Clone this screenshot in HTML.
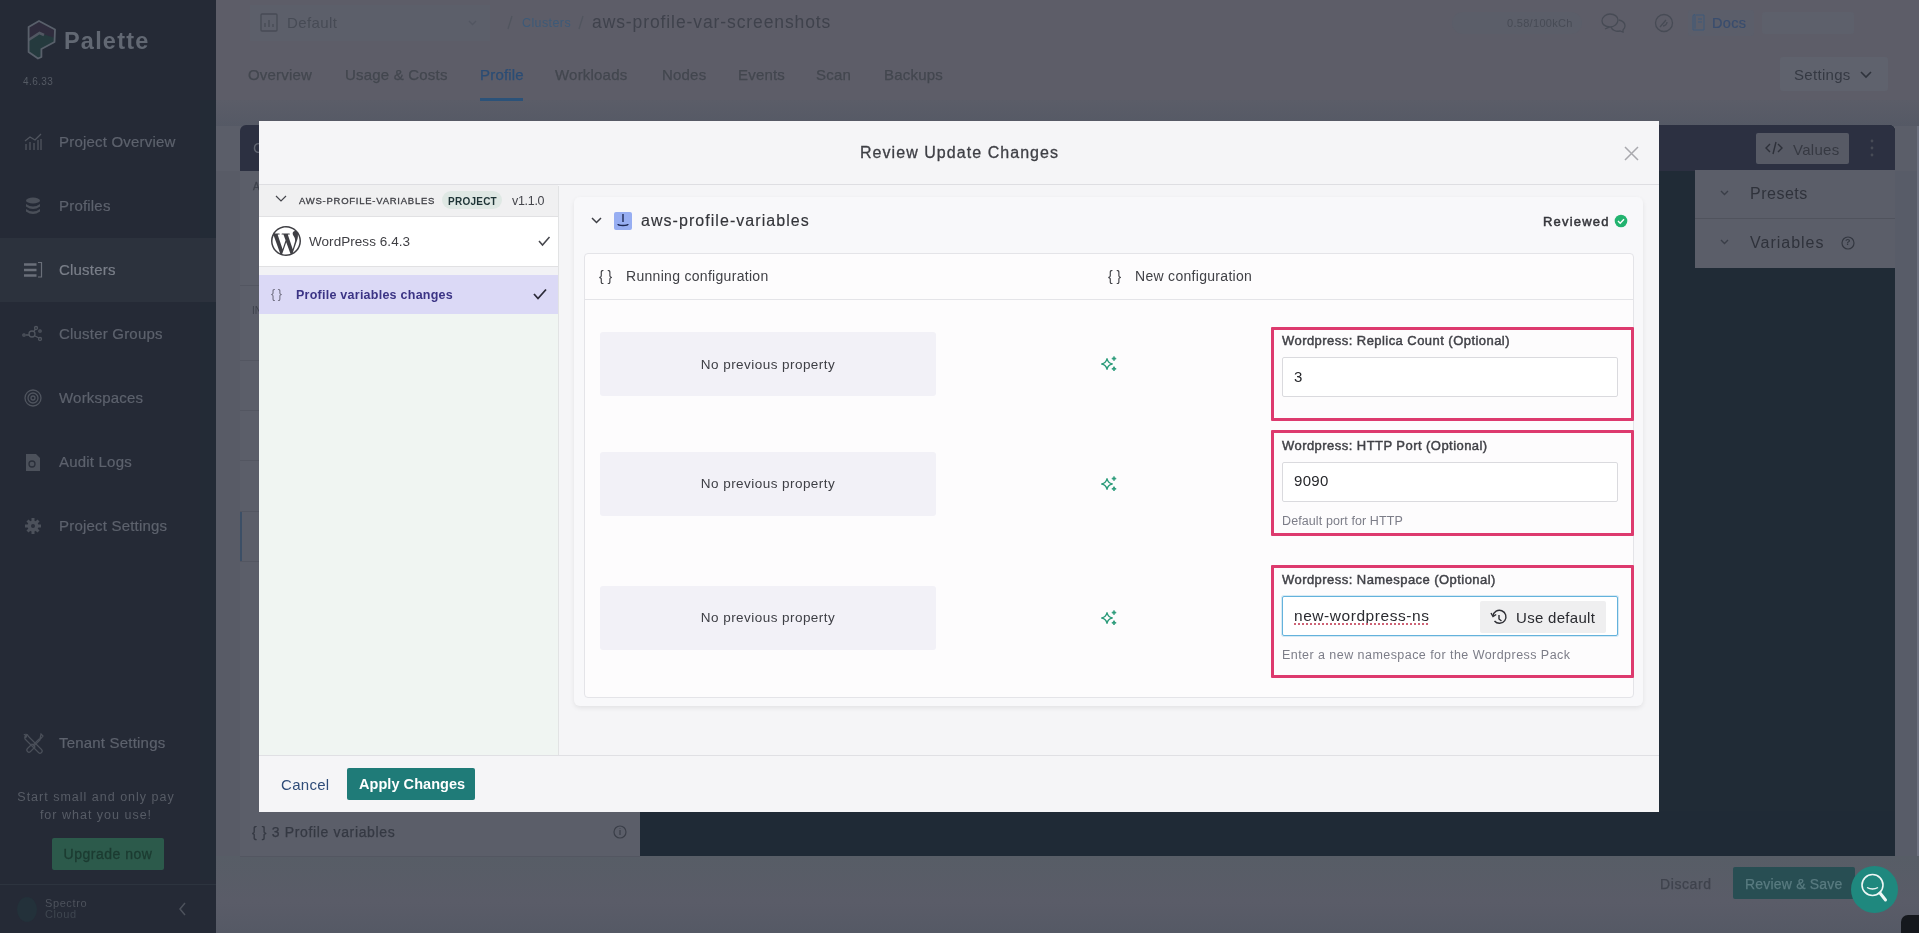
<!DOCTYPE html>
<html><head><meta charset="utf-8">
<style>
*{box-sizing:border-box;margin:0;padding:0}
html,body{width:1919px;height:933px;overflow:hidden}
body{font-family:"Liberation Sans",sans-serif;background:#5b5e69;position:relative;-webkit-font-smoothing:antialiased}
.a{will-change:transform}
.a{position:absolute;white-space:nowrap;line-height:1}
.b{position:absolute}
svg{position:absolute;overflow:visible}
/* sidebar */
#sb{position:absolute;left:0;top:0;width:216px;height:933px;background:#252a36}
#sb .strip{position:absolute;left:200px;top:100px;width:16px;height:780px;background:#232b36}
.nav{left:59px;font-size:15px;color:#5d626d;letter-spacing:0.2px;-webkit-text-stroke:0.2px currentColor}
.tab{top:67px;font-size:15px;color:#43474f;letter-spacing:0.2px;-webkit-text-stroke:0.25px currentColor}
</style></head>
<body>
<!-- ============ SIDEBAR ============ -->
<div id="sb">
  <div class="strip"></div>
  <div class="b" style="left:0;top:238px;width:216px;height:64px;background:#2c323d"></div>
  <svg style="left:0;top:0" width="216" height="100">
    <path d="M39 21 L28.6 27 L28.6 52 L38 58.5 L41.4 57 L41.4 49 L54.5 42 L55 29.5 Z" fill="#2f2c3d"/>
    <path d="M28.6 40 L39.5 33 L55 38 L54.5 42 L41.4 49 L41.4 57 L38 58.5 L28.6 52 Z" fill="#253a3e"/>
    <path d="M28.6 40 L39.5 33 L44 35" fill="none" stroke="#515762" stroke-width="2.5"/>
    <path d="M39 21 L28.6 27 L28.6 52 L38 58.5 L41.4 57 L41.4 49 L54.5 42 L55 29.5 Z" fill="none" stroke="#59606b" stroke-width="1.8" stroke-linejoin="round"/>
  </svg>
  <div class="a" style="left:64px;top:30px;font-size:23.5px;color:#626873;font-weight:bold;letter-spacing:1.2px">Palette</div>
  <div class="a" style="left:23px;top:77px;font-size:10px;color:#555a64;letter-spacing:0.4px">4.6.33</div>

  <div class="nav a" style="top:134px">Project Overview</div>
  <div class="nav a" style="top:198px">Profiles</div>
  <div class="nav a" style="top:262px;color:#7a7f89">Clusters</div>
  <div class="nav a" style="top:326px">Cluster Groups</div>
  <div class="nav a" style="top:390px">Workspaces</div>
  <div class="nav a" style="top:454px">Audit Logs</div>
  <div class="nav a" style="top:518px">Project Settings</div>
  <div class="nav a" style="top:735px">Tenant Settings</div>
  <svg style="left:0;top:0" width="216" height="933" fill="none" stroke="#50555f" stroke-width="1.3">
    <!-- project overview -->
    <path d="M25 141 L30 137 L35 140 L41 134"/>
    <path d="M26 144 v6 M30 142 v8 M34 143 v7 M38 140 v10 M41 139 v11"/>
    <!-- profiles: db stack -->
    <ellipse cx="33" cy="200.5" rx="7" ry="3" fill="#4a4f59" stroke="none"/>
    <path d="M26 204 q7 5 14 0 v2.5 q-7 5 -14 0 z M26 209 q7 5 14 0 v2.5 q-7 5 -14 0 z" fill="#4a4f59" stroke="none"/>
    <!-- clusters -->
    <path d="M24 264.5 h12.5 M24 270 h12.5 M24 275.5 h12.5" stroke-width="2.4" stroke="#6a6f79"/><path d="M38 262.5 h3.5 v14.5 h-3.5" stroke-width="1.2" stroke="#6a6f79"/>
    <!-- cluster groups -->
    <circle cx="32" cy="334" r="3"/><circle cx="36" cy="328" r="1.5"/><circle cx="40" cy="339" r="1.5"/><circle cx="24" cy="335" r="1.2"/><circle cx="40" cy="331" r="1.2"/>
    <path d="M26 335 h3 M34 331 l1.5 -2 M35 336 l4 2"/>
    <!-- workspaces -->
    <circle cx="33" cy="398" r="8"/><circle cx="33" cy="398" r="5"/><circle cx="33" cy="398" r="2"/>
    <!-- audit logs -->
    <path d="M26 454 h10 l4 4 v13 h-14 z" fill="#4c515b" stroke="none"/>
    <circle cx="32" cy="464" r="3" stroke="#2a2f3a"/>
    <!-- project settings gear -->
    <circle cx="33" cy="526" r="5.5" fill="#4c515b" stroke="none"/>
    <path d="M33 518 v16 M25 526 h16 M27.5 520.5 l11 11 M38.5 520.5 l-11 11" stroke-width="3" stroke="#4c515b"/>
    <circle cx="33" cy="526" r="2" fill="#2a2f3a" stroke="none"/>
    <!-- tenant settings -->
    <g stroke="#4a4f59" stroke-width="1.2"><path d="M27 735 q-3 1 -2 4 l1.5 1.5 l12 12 q1.5 1.5 3 0 q1.5 -1.5 0 -3 l-12 -12 l-1 -1 q-1 -3 -4 -2 l2 2 l-1 1.5 z"/><path d="M41 734 l2 2 l-2.5 3 l-1.5 0 l-6 6 l2 2 l-4.5 4.5 q-1.5 1.5 -3 0 q-1.5 -1.5 0 -3 l4.5 -4.5 l2 2 l6 -6 l0 -1.5 z"/></g>
  </svg>
  <div class="a" style="left:0;width:192px;text-align:center;top:788px;font-size:12.5px;color:#575c66;line-height:18px;white-space:normal;letter-spacing:1.0px">Start small and only pay<br>for what you use!</div>
  <div class="a" style="left:52px;top:838px;width:112px;height:32px;background:#2c5a4b;color:#1c3b31;font-size:14px;text-align:center;line-height:32px;border-radius:2px;letter-spacing:0.5px;-webkit-text-stroke:0.3px currentColor">Upgrade now</div>
  <div class="b" style="left:0;top:884px;width:216px;height:1px;background:#2d343f"></div>
  <div class="b" style="left:17px;top:897px;width:20px;height:25px;border-radius:50%;background:#23313a"></div>
  <div class="a" style="left:45px;top:898px;font-size:11px;color:#4d525c;line-height:11px;letter-spacing:0.6px">Spectro<br><span style="color:#3f4650">Cloud</span></div>
  <svg style="left:0;top:0" width="216" height="933" fill="none" stroke="#4d525c" stroke-width="1.5"><path d="M185 903 l-5 6 l5 6"/></svg>
</div>

<!-- ============ MAIN BACKGROUND ============ -->
<div class="b" style="left:216px;top:0;width:1703px;height:933px;background:#5b5e69"></div>
<div class="b" style="left:216px;top:0;width:1703px;height:100px;background:#5d5d68"></div>
<div class="b" style="left:1895px;top:171px;width:22px;height:762px;background:#585c68"></div>
<div class="b" style="left:1917px;top:100px;width:2px;height:833px;background:#6e7280"></div>
<div class="b" style="left:216px;top:100px;width:1703px;height:26px;background:linear-gradient(#5b5d68,#555965)"></div>
<div class="b" style="left:216px;top:856px;width:1703px;height:77px;background:linear-gradient(#575d66,#5a5c68 60%,#555965)"></div>
<!-- top bar -->
<div class="b" style="left:250px;top:5px;width:240px;height:36px;background:#5c5f6a"></div>
<svg style="left:0;top:0" width="1919" height="120" fill="none" stroke="#474b55" stroke-width="1.3">
  <rect x="261" y="14" width="16" height="17" rx="1"/>
  <path d="M265 27 v-4 M269 27 v-7 M273 27 v-3"/>
  <path d="M469 21 l3.5 3.5 l3.5 -3.5" stroke="#525661"/>
  <path d="M508 29 l4 -13 M579 29 l4 -13" stroke="#51555f"/>
  <!-- chat -->
  <path d="M1610 27 c-5 0 -8 -3 -8 -6 c0 -4 4 -7 8 -7 c5 0 8 3 8 6 c0 4 -4 7 -8 7 l-5 2 z" stroke="#474b55"/>
  <path d="M1619 20 c4 1 6 3 6 6 c0 2 -1 3 -2 4 l0 2 l-3 -1 c-4 1 -8 -1 -9 -4" stroke="#474b55"/>
  <!-- help circle -->
  <circle cx="1664" cy="23" r="8.5" stroke="#474b55"/>
  <path d="M1660 27 l6 -7 M1663 26 c2 0 4 -2 4 -4" stroke="#474b55"/>
  <!-- docs -->
  
</svg>
<div class="a" style="left:287px;top:15px;font-size:15px;color:#474b55;letter-spacing:0.4px">Default</div>
<div class="a" style="left:522px;top:17px;font-size:12.5px;color:#3d5a78;letter-spacing:0.4px">Clusters</div>
<div class="a" style="left:592px;top:14px;font-size:17.5px;color:#3f424c;letter-spacing:0.9px">aws-profile-var-screenshots</div>
<div class="b" style="left:1452px;top:12px;width:130px;height:22px;border-radius:11px;background:#5b5e69"></div>
<div class="a" style="left:1507px;top:18px;font-size:11px;color:#474b55;letter-spacing:0.3px">0.58/100kCh</div>
<div class="b" style="left:1688px;top:10px;width:66px;height:26px;border-radius:3px;background:#5b5e6a"></div>
<div class="a" style="left:1712px;top:16px;font-size:14.5px;color:#394d6e;letter-spacing:0.3px;-webkit-text-stroke:0.2px currentColor">Docs</div>
<svg style="left:0;top:0" width="1919" height="60" fill="none" stroke="#3e5878" stroke-width="1"><path d="M1693 16 v14 h11 v-15 h-8 M1693 16 q0 -1.5 2 -1.5 v14 M1698 19 h4 M1698 22 h4"/></svg>
<div class="b" style="left:1762px;top:12px;width:92px;height:22px;background:#5d606b;border-radius:3px"></div>

<div class="tab a" style="left:248px">Overview</div>
<div class="tab a" style="left:345px">Usage &amp; Costs</div>
<div class="tab a" style="left:480px;color:#2b4d75">Profile</div>
<div class="tab a" style="left:555px">Workloads</div>
<div class="tab a" style="left:662px">Nodes</div>
<div class="tab a" style="left:738px">Events</div>
<div class="tab a" style="left:816px">Scan</div>
<div class="tab a" style="left:884px">Backups</div>
<div class="b" style="left:480px;top:98px;width:43px;height:2.5px;background:#2b5279"></div>
<div class="b" style="left:1780px;top:57px;width:108px;height:34px;background:#5f626d;border-radius:3px"></div>
<div class="a" style="left:1794px;top:67px;font-size:15px;color:#353943;letter-spacing:0.3px">Settings</div>
<svg style="left:0;top:0" width="1919" height="120" fill="none"><path d="M1861 72 l5 5 l5 -5" stroke="#2f333c" stroke-width="1.6"/></svg>

<!-- background card -->
<div class="b" style="left:240px;top:125px;width:1655px;height:46px;background:#2c3041;border-radius:6px 6px 0 0"></div>
<div class="a" style="left:253px;top:140px;font-size:15px;color:#5f6470">C</div>
<div class="b" style="left:1640px;top:125px;width:255px;height:731px;background:#202b36;border-radius:0 6px 0 0"></div>
<div class="b" style="left:1640px;top:125px;width:255px;height:46px;background:#2c3041;border-radius:0 6px 0 0"></div>
<div class="b" style="left:1756px;top:133px;width:93px;height:31px;background:#575a65;border-radius:2px"></div>
<div class="a" style="left:1793px;top:142px;font-size:15px;color:#363942;letter-spacing:0.3px">Values</div>

<div class="b" style="left:1695px;top:170px;width:200px;height:98px;background:#5b5e69"></div>
<div class="b" style="left:1695px;top:218px;width:200px;height:1px;background:#50535d"></div>
<div class="a" style="left:1750px;top:186px;font-size:16px;color:#2f323b;letter-spacing:0.5px">Presets</div>
<div class="a" style="left:1750px;top:235px;font-size:16px;color:#2f323b;letter-spacing:1px">Variables</div>
<svg style="left:0;top:0" width="1919" height="300" fill="none" stroke="#2d3039" stroke-width="1.4">
  <path d="M1770 144 l-4 4 l4 4 M1778 144 l4 4 l-4 4 M1776 142 l-3 12"/>
  <circle cx="1872" cy="141" r="1.4" fill="#474b56" stroke="none"/><circle cx="1872" cy="148" r="1.4" fill="#474b56" stroke="none"/><circle cx="1872" cy="155" r="1.4" fill="#474b56" stroke="none"/>
  <path d="M1721 191 l3.5 3.5 l3.5 -3.5 M1721 240 l3.5 3.5 l3.5 -3.5" stroke="#3a3e48"/>
  <circle cx="1848" cy="243" r="6" stroke="#333740" stroke-width="1.2"/>
</svg>
<div class="a" style="left:1845px;top:238px;font-size:9px;color:#333740;font-weight:bold">?</div>
<svg style="left:0;top:0" width="1919" height="300" fill="none" stroke="#333740" stroke-width="1.2"></svg>

<!-- left list behind modal -->
<div class="a" style="left:253px;top:182px;font-size:10px;color:#3e424c;-webkit-text-stroke:0.3px currentColor">A</div>
<div class="a" style="left:252px;top:306px;font-size:10px;color:#3e424c">IN</div>
<div class="b" style="left:216px;top:171px;width:24px;height:685px;background:#585b66"></div>
<div class="b" style="left:240px;top:285px;width:20px;height:1px;background:#535661"></div>
<div class="b" style="left:240px;top:360px;width:20px;height:1px;background:#535661"></div>
<div class="b" style="left:240px;top:410px;width:20px;height:1px;background:#535661"></div>
<div class="b" style="left:240px;top:460px;width:20px;height:1px;background:#535661"></div>
<div class="b" style="left:240px;top:511px;width:20px;height:1px;background:#535661"></div>
<div class="b" style="left:240px;top:561px;width:20px;height:1px;background:#535661"></div>
<div class="b" style="left:240px;top:512px;width:2px;height:49px;background:#3c4f66"></div>

<div class="b" style="left:640px;top:811px;width:1255px;height:45px;background:#1f2a36"></div>
<div class="b" style="left:240px;top:856px;width:400px;height:1px;background:#535661"></div>
<div class="a" style="left:252px;top:825px;font-size:14px;color:#353943;letter-spacing:0.65px;-webkit-text-stroke:0.25px currentColor">{ } 3 Profile variables</div>
<svg style="left:0;top:0" width="1919" height="933" fill="none" stroke="#3a3e48" stroke-width="1.2">
  <circle cx="620" cy="832" r="6"/><path d="M620 830 v5 M620 828 v0.5"/>
</svg>
<div class="a" style="left:1660px;top:877px;font-size:14px;color:#3f434d;letter-spacing:0.6px;-webkit-text-stroke:0.25px currentColor">Discard</div>
<div class="b" style="left:1733px;top:867px;width:122px;height:32px;background:#284e53;border-radius:2px"></div>
<div class="a" style="left:1745px;top:877px;font-size:14px;color:#597b80;letter-spacing:0.2px;-webkit-text-stroke:0.25px currentColor">Review &amp; Save</div>
<div class="b" style="left:1851px;top:866px;width:47px;height:47px;border-radius:50%;background:#1f887e"></div>
<svg style="left:0;top:0" width="1919" height="933" fill="none" stroke="#eef7f5" stroke-width="1.6"><circle cx="1872.5" cy="885" r="10.5"/><path d="M1880 893 l5.5 7" stroke-width="3" stroke-linecap="round"/><path d="M1867 887.5 q5.5 3 11 0" stroke-width="1.4"/></svg>
<div class="b" style="left:1901px;top:915px;width:20px;height:20px;background:#15181d;border-radius:7px 0 0 0"></div>

<!-- ============ MODAL ============ -->
<div class="b" style="left:259px;top:121px;width:1400px;height:691px;background:#f5f5f7"></div>
<div class="a" style="left:860px;top:145px;font-size:16px;color:#3e3f45;letter-spacing:1.05px;-webkit-text-stroke:0.3px currentColor">Review Update Changes</div>
<svg style="left:0;top:0" width="1919" height="933" fill="none" stroke="#a9a9ae" stroke-width="1.5">
  <path d="M1625 147 l13 13 M1638 147 l-13 13"/>
</svg>
<div class="b" style="left:259px;top:184px;width:1400px;height:1px;background:#dedee2"></div>

<!-- left panel -->
<div class="b" style="left:259px;top:185px;width:299px;height:570px;background:#f0f5f2"></div>
<div class="b" style="left:558px;top:186px;width:1px;height:569px;background:#e2e3e4"></div>
<div class="b" style="left:259px;top:185px;width:299px;height:31px;background:#f0f0f1"></div>
<div class="b" style="left:259px;top:216px;width:299px;height:1px;background:#e1e1e3"></div>
<svg style="left:0;top:0" width="1919" height="933" fill="none" stroke="#45464c" stroke-width="1.2">
  <path d="M276 196 l5 5 l5 -5"/>
</svg>
<div class="a" style="left:299px;top:196px;font-size:9.5px;color:#404147;letter-spacing:0.75px;-webkit-text-stroke:0.3px currentColor">AWS-PROFILE-VARIABLES</div>
<div class="b" style="left:442px;top:191px;width:60px;height:18px;border-radius:9px;background:#dfe8e4"></div>
<div class="a" style="left:448px;top:197px;font-size:10px;color:#1e3436;font-weight:bold;letter-spacing:0.25px">PROJECT</div>
<div class="a" style="left:512px;top:195px;font-size:12.5px;color:#45464c;letter-spacing:-0.3px">v1.1.0</div>

<div class="b" style="left:259px;top:217px;width:299px;height:49px;background:#ffffff"></div>
<div class="b" style="left:259px;top:266px;width:299px;height:1px;background:#e1e1e3"></div>
<svg style="left:0;top:0" width="1919" height="933">
  <g transform="translate(271 226) scale(1.25)" fill="#3f3f44"><path d="M21.469 6.825c.84 1.537 1.318 3.3 1.318 5.175 0 3.979-2.156 7.456-5.363 9.325l3.295-9.527c.615-1.54.82-2.771.82-3.864 0-.405-.026-.78-.07-1.11m-7.981.105c.647-.03 1.232-.105 1.232-.105.582-.075.514-.93-.067-.899 0 0-1.755.135-2.88.135-1.064 0-2.85-.15-2.85-.15-.585-.03-.661.855-.075.885 0 0 .54.061 1.125.09l1.68 4.605-2.37 7.08L5.354 6.9c.649-.03 1.234-.1 1.234-.1.585-.075.516-.93-.065-.896 0 0-1.746.138-2.874.138-.2 0-.438-.008-.69-.015C4.911 3.15 8.235 1.215 12 1.215c2.809 0 5.365 1.072 7.286 2.833-.046-.003-.091-.009-.141-.009-1.06 0-1.812.923-1.812 1.914 0 .89.513 1.643 1.06 2.531.411.72.89 1.643.89 2.977 0 .915-.354 1.994-.821 3.479l-1.075 3.585-3.9-11.61.001.014zM12 22.784c-1.059 0-2.081-.153-3.048-.437l3.237-9.406 3.315 9.087c.024.053.05.101.078.149-1.12.393-2.325.609-3.582.609M1.211 12c0-1.564.336-3.05.935-4.392L7.29 21.709C3.694 19.96 1.212 16.271 1.211 12M12 0C5.385 0 0 5.385 0 12s5.385 12 12 12 12-5.385 12-12S18.615 0 12 0"/></g>
  <path d="M539 241 l3.5 4 l7 -8" fill="none" stroke="#45464c" stroke-width="1.5"/>
</svg>
<div class="a" style="left:309px;top:235px;font-size:13.5px;color:#3f3f44;letter-spacing:0.05px">WordPress 6.4.3</div>

<div class="b" style="left:259px;top:267px;width:299px;height:8px;background:#f2f2f5"></div>
<div class="b" style="left:259px;top:275px;width:299px;height:39px;background:#dbd9f6"></div>
<div class="a" style="left:271px;top:288px;font-size:12.5px;color:#6f6e80;letter-spacing:2.5px">{}</div>
<div class="a" style="left:296px;top:289px;font-size:12.5px;color:#3b3485;font-weight:bold;letter-spacing:0.25px">Profile variables changes</div>
<svg style="left:0;top:0" width="1919" height="933">
  <path d="M534 294 l4 4.5 l8 -9" fill="none" stroke="#2c2b3a" stroke-width="1.8"/>
</svg>

<!-- right card -->
<div class="b" style="left:574px;top:197px;width:1069px;height:509px;background:#f8f8fa;border-radius:6px;box-shadow:0 2px 5px rgba(0,0,0,0.08)"></div>
<svg style="left:0;top:0" width="1919" height="933">
  <path d="M592 218 l4.5 4.5 l4.5 -4.5" fill="none" stroke="#3e3f45" stroke-width="1.5"/>
  <rect x="614" y="212" width="18" height="18" rx="2" fill="#97aef2"/>
  <path d="M623 214 v8 M618 224 c0 2 10 2 10 0" fill="none" stroke="#1e2a55" stroke-width="1.4"/>
  <circle cx="1621" cy="221" r="6.3" fill="#22b36f"/>
  <path d="M1618 221 l2.2 2.2 l3.8 -4" fill="none" stroke="#fff" stroke-width="1.4"/>
</svg>
<div class="a" style="left:641px;top:213px;font-size:16px;color:#333439;letter-spacing:1.05px;-webkit-text-stroke:0.15px currentColor">aws-profile-variables</div>
<div class="a" style="left:1543px;top:215px;font-size:13px;color:#35363b;letter-spacing:1.2px;-webkit-text-stroke:0.5px currentColor">Reviewed</div>

<div class="b" style="left:584px;top:253px;width:1050px;height:445px;background:#fdfcfd;border:1px solid #e4e4e8;border-radius:4px"></div>
<div class="b" style="left:585px;top:299px;width:1048px;height:1px;background:#e4e4e8"></div>
<div class="a" style="left:599px;top:269px;font-size:14px;color:#404146;letter-spacing:0px">{ }</div>
<div class="a" style="left:626px;top:269px;font-size:14px;color:#404146;letter-spacing:0.3px">Running configuration</div>
<div class="a" style="left:1108px;top:269px;font-size:14px;color:#404146;letter-spacing:0px">{ }</div>
<div class="a" style="left:1135px;top:269px;font-size:14px;color:#404146;letter-spacing:0.3px">New configuration</div>

<div class="b" style="left:600px;top:332px;width:336px;height:64px;background:#f2f1f7;border-radius:3px"></div>
<div class="b" style="left:600px;top:452px;width:336px;height:64px;background:#f2f1f7;border-radius:3px"></div>
<div class="b" style="left:600px;top:586px;width:336px;height:64px;background:#f2f1f7;border-radius:3px"></div>
<div class="a" style="left:600px;width:336px;text-align:center;top:358px;font-size:13.5px;color:#3d3e44;letter-spacing:0.45px">No previous property</div>
<div class="a" style="left:600px;width:336px;text-align:center;top:477px;font-size:13.5px;color:#3d3e44;letter-spacing:0.45px">No previous property</div>
<div class="a" style="left:600px;width:336px;text-align:center;top:611px;font-size:13.5px;color:#3d3e44;letter-spacing:0.45px">No previous property</div>

<svg style="left:0;top:0" width="1919" height="933" fill="none" stroke="#2c9b7a" stroke-width="1.3" stroke-linejoin="round">
  <g id="sp"><path d="M1101.7 364 q4.3 -0.8 5.3 -5.3 q1 4.5 5.3 5.3 q-4.3 0.8 -5.3 5.3 q-1 -4.5 -5.3 -5.3 z"/><path d="M1111.8 358.6 q1.7 -0.4 2.2 -2.2 q0.5 1.8 2.2 2.2 q-1.7 0.4 -2.2 2.2 q-0.5 -1.8 -2.2 -2.2z M1111.8 368.8 q1.7 -0.4 2.2 -2.2 q0.5 1.8 2.2 2.2 q-1.7 0.4 -2.2 2.2 q-0.5 -1.8 -2.2 -2.2z" fill="#2c9b7a" stroke-width="0.8"/></g>
  <use href="#sp" y="120"/>
  <use href="#sp" y="254"/>
</svg>

<!-- red boxes -->
<div class="b" style="left:1271px;top:327px;width:363px;height:94px;border:3px solid #dd3a6e;border-radius:1px"></div>
<div class="b" style="left:1271px;top:430px;width:363px;height:106px;border:3px solid #dd3a6e;border-radius:1px"></div>
<div class="b" style="left:1271px;top:565px;width:363px;height:113px;border:3px solid #dd3a6e;border-radius:1px"></div>

<div class="a" style="left:1282px;top:334px;font-size:13px;color:#404147;letter-spacing:0.45px;-webkit-text-stroke:0.45px currentColor">Wordpress: Replica Count (Optional)</div>
<div class="b" style="left:1282px;top:357px;width:336px;height:40px;background:#fff;border:1px solid #dadade;border-radius:2px"></div>
<div class="a" style="left:1294px;top:369px;font-size:15px;color:#26272b">3</div>

<div class="a" style="left:1282px;top:439px;font-size:13px;color:#404147;letter-spacing:0.45px;-webkit-text-stroke:0.45px currentColor">Wordpress: HTTP Port (Optional)</div>
<div class="b" style="left:1282px;top:462px;width:336px;height:40px;background:#fff;border:1px solid #dadade;border-radius:2px"></div>
<div class="a" style="left:1294px;top:473px;font-size:15px;color:#26272b;letter-spacing:0.3px">9090</div>
<div class="a" style="left:1282px;top:515px;font-size:12.5px;color:#7c7d88;letter-spacing:0.1px">Default port for HTTP</div>

<div class="a" style="left:1282px;top:573px;font-size:13px;color:#404147;letter-spacing:0.45px;-webkit-text-stroke:0.45px currentColor">Wordpress: Namespace (Optional)</div>
<div class="b" style="left:1282px;top:596px;width:336px;height:40px;background:#fff;border:1px solid #64b2dc;border-radius:2px;box-shadow:0 0 0 1px rgba(100,178,220,0.25)"></div>
<div class="a" style="left:1294px;top:608px;font-size:15.5px;color:#2a2b30;letter-spacing:0.55px">new-wordpress-ns</div>
<div class="b" style="left:1294px;top:623px;width:134px;height:0;border-top:2px dotted #cd6275"></div>
<div class="b" style="left:1480px;top:601px;width:126px;height:32px;background:#efeff0;border-radius:2px"></div>
<svg style="left:0;top:0" width="1919" height="933" fill="none" stroke="#2e2f35" stroke-width="1.4">
  <path d="M1493 616 a6.5 6.5 0 1 1 1.5 5"/><path d="M1491 613 l2 3.5 l3.2 -2"/><path d="M1499 615 v4 l2.5 2"/>
</svg>
<div class="a" style="left:1516px;top:610px;font-size:15px;color:#2a2b30;letter-spacing:0.3px">Use default</div>
<div class="a" style="left:1282px;top:649px;font-size:12.5px;color:#7c7d88;letter-spacing:0.45px">Enter a new namespace for the Wordpress Pack</div>

<!-- footer -->
<div class="b" style="left:259px;top:755px;width:1400px;height:1px;background:#e0e0e4"></div>
<div class="a" style="left:281px;top:777px;font-size:15px;color:#2f4c78;letter-spacing:0.3px">Cancel</div>
<div class="b" style="left:347px;top:768px;width:128px;height:32px;background:#1f7b78;border-radius:2px"></div>
<div class="a" style="left:359px;top:777px;font-size:14.5px;color:#ffffff;font-weight:bold;letter-spacing:0.05px">Apply Changes</div>
</body></html>
